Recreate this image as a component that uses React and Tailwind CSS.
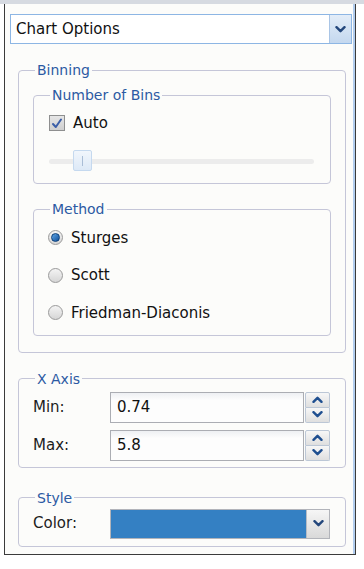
import React from 'react';

const font = { fontFamily: '"DejaVu Sans", "Liberation Sans", sans-serif' };

function Chevron({ up = false, className = '' }) {
  return (
    <svg className={className} width="11" height="7" viewBox="0 0 11 7" fill="none">
      <path
        d={up ? 'M1.5 5.8L5.5 1.8L9.5 5.8' : 'M1.5 1.2L5.5 5.2L9.5 1.2'}
        stroke="currentColor"
        strokeWidth="2.4"
        strokeLinecap="round"
        strokeLinejoin="round"
      />
    </svg>
  );
}

function Group({ title, className = '', pad = 'px-[14px]', legendClass = 'ml-[2px] px-[2px]', children }) {
  return (
    <fieldset className={`border border-[#c5c6d8] rounded-[4px] ${pad} ${className}`}>
      <legend className={`text-[14px] leading-[16px] text-[#2c5aa3] ${legendClass}`}>{title}</legend>
      {children}
    </fieldset>
  );
}

function Radio({ checked, label }) {
  return (
    <div className="h-[37.5px] flex items-center">
      <span className="w-[15px] h-[15px] rounded-full border border-[#9a9a9a] bg-gradient-to-b from-[#f4f4f4] to-[#d6d6d6] flex items-center justify-center">
        {checked && (
          <span className="w-[9px] h-[9px] rounded-full bg-gradient-to-br from-[#5fa6e6] to-[#0d4f99] border border-[#0b3f7a]"></span>
        )}
      </span>
      <span className="ml-[8px] text-[15px] text-[#111]">{label}</span>
    </div>
  );
}

function Spinner({ label, value }) {
  return (
    <div className="flex items-center h-[31px]">
      <span className="w-[77px] text-[15px] text-[#1d1d1d]">{label}</span>
      <div className="flex-1 h-full flex">
        <div className="flex-1 border border-[#abadb3] bg-gradient-to-b from-[#eef0f3] to-[#fdfdfd] to-[25%] flex items-center pl-[6px] text-[15px] text-[#111]">
          {value}
        </div>
        <div className="w-[25px] flex flex-col ml-[1px]">
          <div className="flex-1 border border-[#bcc7d6] rounded-t-[2px] bg-gradient-to-b from-[#f7f7f7] to-[#dfdfdf] flex items-center justify-center text-[#1f4f90]">
            <Chevron up />
          </div>
          <div className="flex-1 border border-t-0 border-[#bcc7d6] rounded-b-[2px] bg-gradient-to-b from-[#f7f7f7] to-[#dfdfdf] flex items-center justify-center text-[#1f4f90]">
            <Chevron />
          </div>
        </div>
      </div>
    </div>
  );
}

export default function App() {
  return (
    <div className="w-[364px] h-[569px] bg-white overflow-hidden" style={font}>
      <div className="h-[4px] bg-[#d6dae1]"></div>
      <div className="ml-[4px] w-[352px] h-[551px] flex border-l border-r border-b border-[#3b3b3b] bg-[#fcfcfa]">
        <div className="flex-1 pl-[5px]">
          {/* Header select */}
          <div className="mt-[10px] w-[342px] h-[30px] border border-[#8db6e4] bg-white flex">
            <div className="flex-1 flex items-center pl-[5px] text-[15px] text-[#111]">Chart Options</div>
            <div className="w-[22px] border-l border-[#a9c5e6] bg-gradient-to-b from-[#e3edf8] to-[#c4d8ef] flex items-center justify-center text-[#24477c]">
              <Chevron />
            </div>
          </div>

          {/* Binning */}
          <Group title="Binning" className="mt-[18px] ml-[8px] w-[328px] pt-[9px] pb-[16px]">
            <Group title="Number of Bins" pad="px-[15px]" legendClass="ml-[1px] px-[2px]" className="pt-[10px] pb-[11px]">
              <div className="h-[20px] flex items-center">
                <span className="w-[16px] h-[16px] border border-[#8e8f8f] bg-gradient-to-b from-[#e6e6e6] to-[#cfcfcf] flex items-center justify-center text-[#3c5fa8]">
                  <svg width="12" height="11" viewBox="0 0 12 11" fill="none">
                    <path d="M2 6L4.8 9L10 1.5" stroke="currentColor" strokeWidth="2" strokeLinecap="round" strokeLinejoin="round" />
                  </svg>
                </span>
                <span className="ml-[8px] text-[15px] text-[#111]">Auto</span>
              </div>
              <div className="mt-[17px] h-[22px] relative flex items-center">
                <div className="w-[265px] h-[5px] rounded-full bg-[#ececec]"></div>
                <div className="absolute left-[24px] top-0 w-[19px] h-[21px] rounded-[2px] border border-[#c5d9ef] bg-gradient-to-b from-[#f1f6fc] to-[#dde9f7] flex justify-center">
                  <span className="mt-[5px] w-[1px] h-[10px] bg-[#a9bdd6]"></span>
                </div>
              </div>
            </Group>

            <Group title="Method" pad="px-[14px]" legendClass="ml-[2px] px-[2px]" className="mt-[17px] pt-[2px] pb-[3px]">
              <Radio checked label="Sturges" />
              <Radio label="Scott" />
              <Radio label="Friedman-Diaconis" />
            </Group>
          </Group>

          {/* X Axis */}
          <Group title="X Axis" pad="pl-[14px] pr-[15px]" legendClass="ml-[2px] px-[2px]" className="mt-[18px] ml-[8px] w-[328px] pt-[5px] pb-[6px]">
            <Spinner label="Min:" value="0.74" />
            <div className="h-[7px]"></div>
            <Spinner label="Max:" value="5.8" />
          </Group>

          {/* Style */}
          <Group title="Style" pad="pl-[14px] pr-[15px]" legendClass="ml-[2px] px-[2px]" className="mt-[22px] ml-[8px] w-[328px] pt-[3px] pb-[7px]">
            <div className="flex items-center h-[30px]">
              <span className="w-[77px] text-[15px] text-[#1d1d1d]">Color:</span>
              <div className="flex-1 h-full flex border border-[#b2b4ba]">
                <div className="flex-1 bg-[#3480c3]"></div>
                <div className="w-[23px] border-l border-[#b7bcc4] bg-gradient-to-b from-[#f6f6f6] to-[#d9d9d9] flex items-center justify-center text-[#24477c]">
                  <Chevron />
                </div>
              </div>
            </div>
          </Group>
        </div>
        <div className="w-[2px] bg-[#b2cdee]"></div>
      </div>
    </div>
  );
}
